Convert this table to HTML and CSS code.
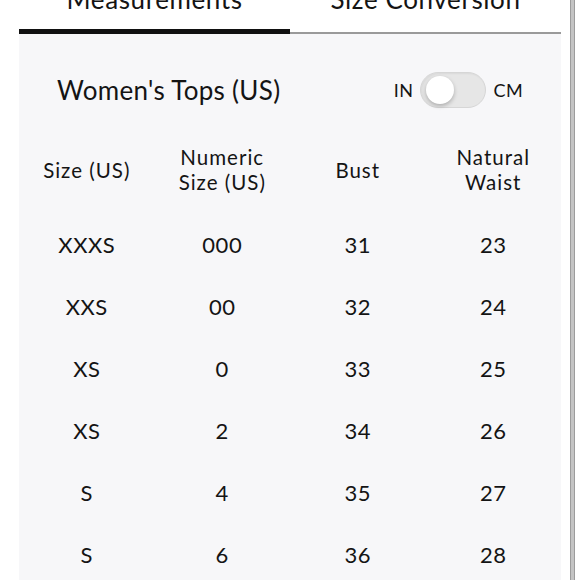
FILE: index.html
```html
<!DOCTYPE html>
<html>
<head>
<meta charset="utf-8">
<link rel="stylesheet" href="styles.css">
</head>
<body>
<div class="screen">
  <div class="main">
    <div class="tabs">
      <div class="tab tab-active"><span class="tab-label">Measurements</span></div>
      <div class="tab"><span class="tab-label">Size Conversion</span></div>
    </div>
    <div class="panel">
      <div class="title-row">
        <h1 class="title">Women's Tops (US)</h1>
        <div class="units">
          <span class="unit">IN</span>
          <span class="switch"><span class="knob"></span></span>
          <span class="unit">CM</span>
        </div>
      </div>
      <div class="table">
        <div class="row head">
          <div class="cell">Size (US)</div>
          <div class="cell">Numeric<br>Size (US)</div>
          <div class="cell">Bust</div>
          <div class="cell">Natural<br>Waist</div>
        </div>
        <div class="row"><div class="cell">XXXS</div><div class="cell">000</div><div class="cell">31</div><div class="cell">23</div></div>
        <div class="row"><div class="cell">XXS</div><div class="cell">00</div><div class="cell">32</div><div class="cell">24</div></div>
        <div class="row"><div class="cell">XS</div><div class="cell">0</div><div class="cell">33</div><div class="cell">25</div></div>
        <div class="row"><div class="cell">XS</div><div class="cell">2</div><div class="cell">34</div><div class="cell">26</div></div>
        <div class="row"><div class="cell">S</div><div class="cell">4</div><div class="cell">35</div><div class="cell">27</div></div>
        <div class="row"><div class="cell">S</div><div class="cell">6</div><div class="cell">36</div><div class="cell">28</div></div>
      </div>
    </div>
  </div>
  <div class="scrollbar"></div>
</div>
</body>
</html>
```
FILE: styles.css
```css
html, body {
  margin: 0;
  padding: 0;
  background: #ffffff;
  overflow: hidden;
}
body {
  font-family: Lato, "Noto Sans", sans-serif;
  color: #141414;
}
.screen {
  display: flex;
  width: 580px;
  height: 580px;
  overflow: hidden;
}
.main {
  width: 542px;
  padding-left: 19px;
  padding-right: 9px;
}
.scrollbar {
  width: 5px;
  height: 580px;
  background: #c4c4c4;
  box-shadow: inset 1px 0 0 #9c9c9c, inset -1px 0 0 #9c9c9c;
}
.tabs {
  display: flex;
  height: 34px;
  align-items: flex-end;
}
.tab {
  flex: 1;
  display: flex;
  justify-content: center;
  border-bottom: 2px solid #9a9a9a;
  box-sizing: border-box;
  height: 34px;
}
.tab-active {
  border-bottom: 5px solid #111111;
}
.tab-label {
  display: block;
  font-size: 26px;
  line-height: 26px;
  letter-spacing: 0.6px;
  margin-top: -14px;
  color: #141414;
}
.panel {
  background: #f7f7f9;
  height: 546px;
  padding-top: 36px;
  box-sizing: border-box;
}
.title-row {
  display: flex;
  justify-content: space-between;
  align-items: center;
  height: 40px;
  padding: 0 38px;
}
.title {
  margin: 0;
  font-size: 26px;
  font-weight: 400;
  letter-spacing: 0.3px;
}
.units {
  display: flex;
  align-items: center;
  gap: 7px;
}
.unit {
  font-size: 18px;
  letter-spacing: 0.4px;
}
.switch {
  display: flex;
  align-items: center;
  width: 66px;
  height: 36px;
  border-radius: 18px;
  background: #e6e6e6;
  border: 1px solid #d6d6d6;
  box-sizing: border-box;
  padding-left: 5px;
  box-shadow: inset 1px 1px 2px rgba(0, 0, 0, 0.06);
}
.knob {
  width: 28px;
  height: 28px;
  border-radius: 50%;
  background: #ffffff;
  box-shadow: 0 2px 4px rgba(0, 0, 0, 0.25);
}
.table {
  margin-top: 17px;
}
.row {
  display: grid;
  grid-template-columns: repeat(4, 1fr);
  height: 62px;
  align-items: center;
  text-align: center;
  font-size: 22px;
  letter-spacing: 0.5px;
}
.row.head {
  height: 86px;
  font-size: 20.5px;
  line-height: 25px;
  letter-spacing: 1px;
}
```
